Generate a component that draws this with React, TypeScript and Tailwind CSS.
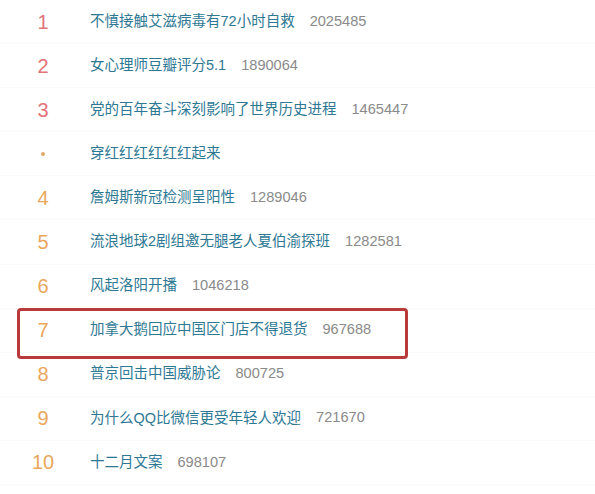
import React from 'react';

type Item = { rank: number | null; title: string; count?: number };

const items: Item[] = [
  { rank: 1, title: '不慎接触艾滋病毒有72小时自救', count: 2025485 },
  { rank: 2, title: '女心理师豆瓣评分5.1', count: 1890064 },
  { rank: 3, title: '党的百年奋斗深刻影响了世界历史进程', count: 1465447 },
  { rank: null, title: '穿红红红红红红起来' },
  { rank: 4, title: '詹姆斯新冠检测呈阳性', count: 1289046 },
  { rank: 5, title: '流浪地球2剧组邀无腿老人夏伯渝探班', count: 1282581 },
  { rank: 6, title: '风起洛阳开播', count: 1046218 },
  { rank: 7, title: '加拿大鹅回应中国区门店不得退货', count: 967688 },
  { rank: 8, title: '普京回击中国威胁论', count: 800725 },
  { rank: 9, title: '为什么QQ比微信更受年轻人欢迎', count: 721670 },
  { rank: 10, title: '十二月文案', count: 698107 },
];

export default function App() {
  return (
    <div
      className="w-[595px] h-[494px] bg-white overflow-hidden"
      style={{ fontFamily: '"Liberation Sans", "Noto Sans CJK SC", sans-serif' }}
    >
      {items.map((item, i) => (
        <div
          key={i}
          className="relative flex items-center h-[44.1px] border-b border-[#f8f8f8]"
        >
          <div className="w-[86px] flex justify-center">
            {item.rank === null ? (
              <span className="w-[4px] h-[4px] rounded-full bg-[#e2a866]" />
            ) : (
              <span
                className={`text-[20px] leading-none ${
                  item.rank <= 3 ? 'text-[#e2737a]' : 'text-[#eaa75c]'
                }`}
              >
                {item.rank}
              </span>
            )}
          </div>
          <span className="ml-[4px] text-[14.5px] text-[#2e7894] whitespace-nowrap">
            {item.title}
          </span>
          {item.count !== undefined && (
            <span className="ml-[15px] text-[14.6px] text-[#8a8a8a]">{item.count}</span>
          )}
          {item.rank === 7 && (
            <div className="absolute left-[17px] top-[-1px] w-[391px] h-[51px] border-[3px] border-[#b93a3a] rounded-[4px]" />
          )}
        </div>
      ))}
    </div>
  );
}
